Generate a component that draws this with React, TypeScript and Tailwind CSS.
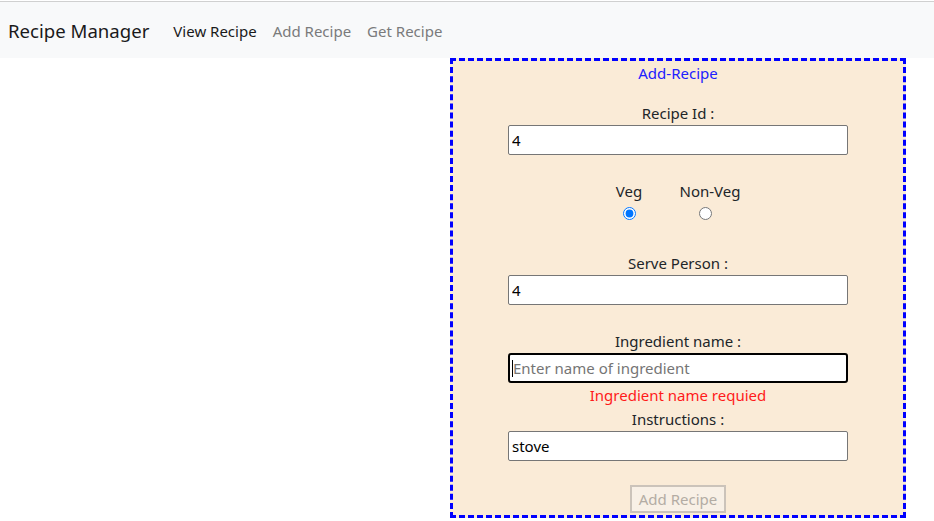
import React from 'react';

const Field: React.FC<{ label: string; value?: string; placeholder?: string; focused?: boolean }> = ({
  label,
  value,
  placeholder,
  focused,
}) => (
  <>
    <label className="h-6 leading-6 text-[15px] text-[#212529]">{label}</label>
    <div className="relative">
      <input
        readOnly
        value={value}
        placeholder={placeholder}
        className={
          focused
            ? 'w-[340px] h-[30px] bg-white border-2 border-black rounded-[3px] px-[3px] text-[15px] text-black placeholder:text-[#757575] outline-none'
            : 'w-[340px] h-[30px] bg-white border border-[#767676] rounded-[2px] px-[3px] text-[15px] text-black outline-none'
        }
      />
      {focused && <span className="absolute left-[4px] top-[7px] w-px h-[17px] bg-black" />}
    </div>
  </>
);

const App: React.FC = () => {
  return (
    <div className="min-h-[521px] bg-white font-['Noto_Sans','Open_Sans',sans-serif]">
      {/* Navbar */}
      <div className="pt-px">
        <nav className="h-[57px] border-t border-[#d0d0d0] bg-[#f8f9fa] flex items-center pl-2 pt-[2px]">
          <span className="text-[18.6px] text-[#1a1a1a] mr-4">Recipe Manager</span>
          <a className="px-2 text-[15px] text-[#1a1a1a]">View Recipe</a>
          <a className="px-2 text-[15px] text-[#7a7b7c]">Add Recipe</a>
          <a className="px-2 text-[15px] text-[#7a7b7c]">Get Recipe</a>
        </nav>
      </div>

      {/* Add recipe form */}
      <div className="ml-[450px] w-[456px] h-[460px] border-[3px] border-dashed border-[#0000ff] bg-[#faebd7] flex flex-col items-center">
        <div className="h-6 leading-6 text-[15px] text-[#2020ff]">Add-Recipe</div>

        <div className="mt-4 flex flex-col items-center">
          <Field label="Recipe Id :" value="4" />
        </div>

        <div className="mt-6 h-[72px] flex pl-[4px]">
          <div className="w-[60px] flex flex-col items-center">
            <span className="h-6 leading-6 text-[15px] text-[#212529]">Veg</span>
            <input type="radio" name="type" defaultChecked className="mt-[4px] w-[13px] h-[13px]" />
          </div>
          <div className="w-[102px] flex flex-col items-center">
            <span className="h-6 leading-6 text-[15px] text-[#212529]">Non-Veg</span>
            <input type="radio" name="type" className="mt-[4px] mr-[9px] w-[13px] h-[13px]" />
          </div>
        </div>

        <div className="flex flex-col items-center">
          <Field label="Serve Person :" value="4" />
        </div>

        <div className="mt-6 flex flex-col items-center">
          <Field label="Ingredient name :" placeholder="Enter name of ingredient" focused />
          <div className="h-6 leading-6 text-[15px] text-[#ff1a1a]">Ingredient name requied</div>
          <Field label="Instructions :" value="stove" />
        </div>

        <button
          disabled
          className="mt-6 h-[28px] w-[96px] border-2 border-[#cbc3ba] bg-[#f8f0e6] text-[15px] text-[#b3aca4]"
        >
          Add Recipe
        </button>
      </div>
    </div>
  );
};

export default App;
